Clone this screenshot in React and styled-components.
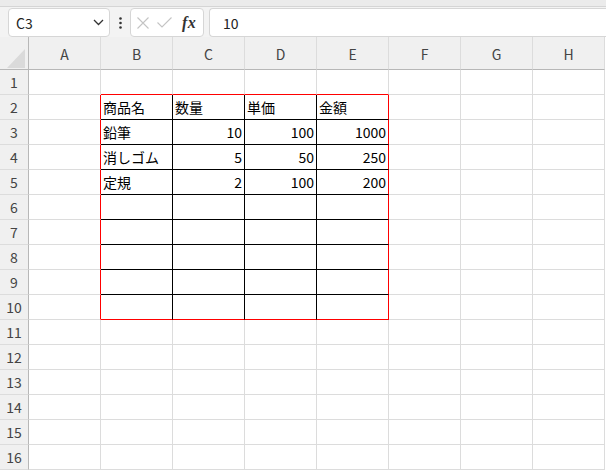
import React from "react";
import styled, { createGlobalStyle } from "styled-components";

const Global = createGlobalStyle`
  html, body { margin: 0; padding: 0; background: #ffffff; overflow: hidden; }
  body { font-family: "Noto Sans CJK JP", "Noto Sans", sans-serif; }
  * { box-sizing: border-box; }
`;

const Page = styled.div`
  width: 606px;
  height: 470px;
  overflow: hidden;
  display: flex;
  flex-direction: column;
`;

const TopStrip = styled.div`
  height: 8px;
  background: #ebebeb;
  border-bottom: 1px solid #d5d5d5;
`;

const FormulaBar = styled.div`
  height: 30px;
  background: #f3f3f3;
  display: flex;
  align-items: flex-start;
  padding: 1px 0 0 8px;
`;

const Box = styled.div`
  height: 29px;
  background: #ffffff;
  border: 1px solid #d6d6d6;
  border-radius: 4px;
  display: flex;
  align-items: center;
`;

const NameBox = styled(Box)`
  width: 102px;
  padding: 0 5px 0 7px;
  justify-content: space-between;
  font-size: 14px;
  color: #222;
`;

const Dots = styled.div`
  width: 20px;
  height: 29px;
  display: flex;
  align-items: center;
  justify-content: center;
`;

const FxBox = styled(Box)`
  width: 74px;
  padding: 0 4px 0 6px;
  gap: 8px;
`;

const FxText = styled.span`
  font-family: "Liberation Serif", serif;
  font-style: italic;
  font-weight: bold;
  font-size: 16px;
  color: #333;
  margin-left: 2px;
  letter-spacing: 0.5px;
`;

const InputBox = styled(Box)`
  flex: 1;
  margin-left: 5px;
  border-right: none;
  border-radius: 4px 0 0 4px;
  padding-left: 13px;
  font-size: 14px;
  color: #222;
`;

const Sheet = styled.div`
  display: grid;
  grid-template-columns: 29px repeat(8, 72px);
  grid-template-rows: 33px repeat(16, 25px);
`;

const Corner = styled.div`
  background: #f0f0f0;
  border-right: 1px solid #b7b7b7;
  border-bottom: 1px solid #b7b7b7;
  position: relative;
`;

const ColHead = styled.div`
  background: #f0f0f0;
  border-right: 1px solid #dcdcdc;
  border-bottom: 1px solid #b7b7b7;
  display: flex;
  align-items: center;
  justify-content: center;
  font-size: 14px;
  color: #444;
  padding-top: 1px;
`;

const RowHead = styled.div`
  background: #f0f0f0;
  border-right: 1px solid #b7b7b7;
  border-bottom: 1px solid #dcdcdc;
  display: flex;
  align-items: center;
  justify-content: center;
  font-size: 14px;
  color: #444;
`;

const Cell = styled.div`
  border-right: 1px solid ${(p) => p.$right};
  border-bottom: 1px solid ${(p) => p.$bottom};
  display: flex;
  align-items: center;
  justify-content: ${(p) => (p.$num ? "flex-end" : "flex-start")};
  padding: 0 2px 0 2px;
  font-size: 14px;
  color: #000;
  white-space: nowrap;
  overflow: visible;
`;

const GRID = "#dcdcdc";
const RED = "#ff0000";
const BLACK = "#000000";

const cols = ["A", "B", "C", "D", "E", "F", "G", "H"];

const data = {
  2: ["商品名", "数量", "単価", "金額"],
  3: ["鉛筆", 10, 100, 1000],
  4: ["消しゴム", 5, 50, 250],
  5: ["定規", 2, 100, 200],
};

function borders(row, col) {
  const inTable = row >= 2 && row <= 10;
  const tableCol = col >= 1 && col <= 4;
  let right = GRID;
  let bottom = GRID;
  if (inTable) {
    if (col === 0 || col === 4) right = RED;
    else if (tableCol) right = BLACK;
  }
  if (tableCol) {
    if (row === 1 || row === 10) bottom = RED;
    else if (inTable) bottom = BLACK;
  }
  return { right, bottom };
}

export default function App() {
  const rows = Array.from({ length: 16 }, (_, i) => i + 1);
  return (
    <Page>
      <Global />
      <TopStrip />
      <FormulaBar>
        <NameBox>
          <span>C3</span>
          <svg width="11" height="7" viewBox="0 0 11 7">
            <path d="M1 1 L5.5 5.5 L10 1" fill="none" stroke="#333" strokeWidth="1.3" />
          </svg>
        </NameBox>
        <Dots>
          <svg width="3" height="12" viewBox="0 0 3 12">
            <circle cx="1.5" cy="1.5" r="1.3" fill="#333" />
            <circle cx="1.5" cy="6" r="1.3" fill="#333" />
            <circle cx="1.5" cy="10.5" r="1.3" fill="#333" />
          </svg>
        </Dots>
        <FxBox>
          <svg width="12" height="12" viewBox="0 0 12 12">
            <path d="M0.5 0.5 L11.5 11.5 M11.5 0.5 L0.5 11.5" stroke="#c4c4c4" strokeWidth="1.1" fill="none" />
          </svg>
          <svg width="15" height="11" viewBox="0 0 15 11">
            <path d="M0.5 5.5 L5 10 L14.5 0.5" stroke="#c4c4c4" strokeWidth="1.1" fill="none" />
          </svg>
          <FxText>fx</FxText>
        </FxBox>
        <InputBox>10</InputBox>
      </FormulaBar>
      <Sheet>
        <Corner>
          <svg width="18" height="19" viewBox="0 0 18 19" style={{ position: "absolute", right: 3, bottom: 1 }}>
            <polygon points="18,0 18,19 0,19" fill="#dadada" />
          </svg>
        </Corner>
        {cols.map((c) => (
          <ColHead key={c}>{c}</ColHead>
        ))}
        {rows.map((r) => (
          <React.Fragment key={r}>
            <RowHead>{r}</RowHead>
            {cols.map((c, ci) => {
              const b = borders(r, ci);
              const rowData = data[r];
              const v = rowData && ci >= 1 && ci <= 4 ? rowData[ci - 1] : "";
              return (
                <Cell key={c} $right={b.right} $bottom={b.bottom} $num={typeof v === "number"}>
                  {v}
                </Cell>
              );
            })}
          </React.Fragment>
        ))}
      </Sheet>
    </Page>
  );
}
